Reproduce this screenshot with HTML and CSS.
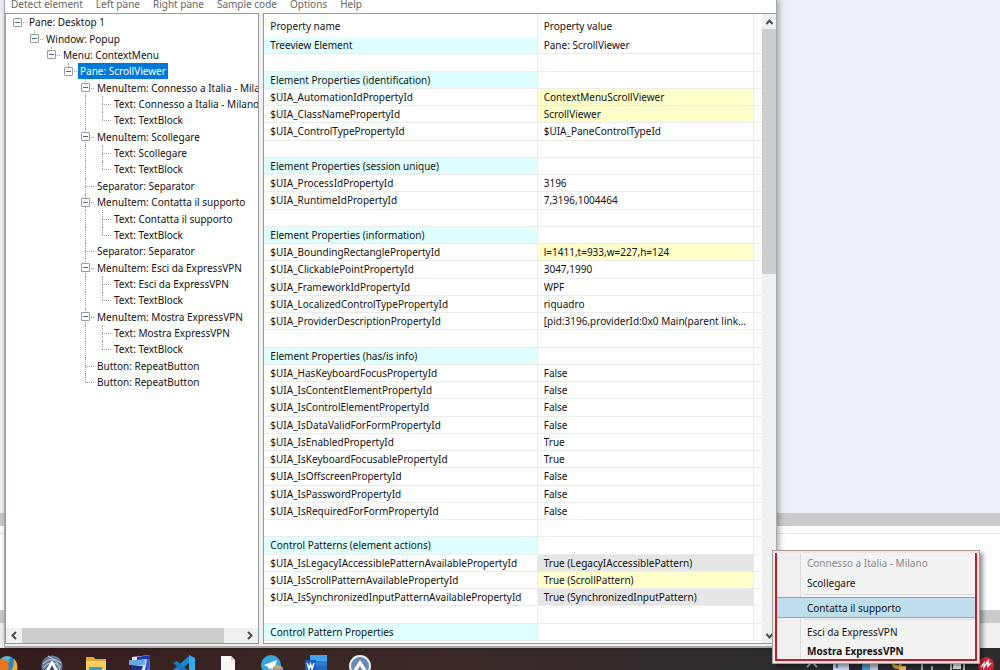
FILE: index.html
```html
<!DOCTYPE html>
<html lang="en">
<head>
<meta charset="utf-8">
<title>UI inspector</title>
<link rel="stylesheet" href="styles.css">
</head>
<body>
<main class="desktop">
  <div class="backdrop"><div class="sky"></div><div class="band"></div><div class="sheet"></div><div class="band"></div><div class="foot"></div></div>
  <section class="window">
    <nav class="menubar">
      <button>Detect element</button><button>Left pane</button><button>Right pane</button><button>Sample code</button><button>Options</button><button>Help</button>
    </nav>
    <div class="panes">
      <div class="pane tree-pane">
        <div class="tree-view">
        <ul class="tree">
          <li class="row l0"><span class="g first last"><button class="box" aria-label="Collapse"></button></span><span class="label">Pane: Desktop 1</span></li>
          <li class="row l1"><span class="g last"><button class="box" aria-label="Collapse"></button></span><span class="label">Window: Popup</span></li>
          <li class="row l2"><span class="g last"><button class="box" aria-label="Collapse"></button></span><span class="label">Menu: ContextMenu</span></li>
          <li class="row l3"><span class="g last"><button class="box" aria-label="Collapse"></button></span><span class="label selected">Pane: ScrollViewer</span></li>
          <li class="row l4"><span class="g"><button class="box" aria-label="Collapse"></button></span><span class="label">MenuItem: Connesso a Italia - Milano</span></li>
          <li class="row l4"><span class="g line"></span><span class="g"></span><span class="label">Text: Connesso a Italia - Milano</span></li>
          <li class="row l4"><span class="g line"></span><span class="g last"></span><span class="label">Text: TextBlock</span></li>
          <li class="row l4"><span class="g"><button class="box" aria-label="Collapse"></button></span><span class="label">MenuItem: Scollegare</span></li>
          <li class="row l4"><span class="g line"></span><span class="g"></span><span class="label">Text: Scollegare</span></li>
          <li class="row l4"><span class="g line"></span><span class="g last"></span><span class="label">Text: TextBlock</span></li>
          <li class="row l4"><span class="g"></span><span class="label">Separator: Separator</span></li>
          <li class="row l4"><span class="g"><button class="box" aria-label="Collapse"></button></span><span class="label">MenuItem: Contatta il supporto</span></li>
          <li class="row l4"><span class="g line"></span><span class="g"></span><span class="label">Text: Contatta il supporto</span></li>
          <li class="row l4"><span class="g line"></span><span class="g last"></span><span class="label">Text: TextBlock</span></li>
          <li class="row l4"><span class="g"></span><span class="label">Separator: Separator</span></li>
          <li class="row l4"><span class="g"><button class="box" aria-label="Collapse"></button></span><span class="label">MenuItem: Esci da ExpressVPN</span></li>
          <li class="row l4"><span class="g line"></span><span class="g"></span><span class="label">Text: Esci da ExpressVPN</span></li>
          <li class="row l4"><span class="g line"></span><span class="g last"></span><span class="label">Text: TextBlock</span></li>
          <li class="row l4"><span class="g"><button class="box" aria-label="Collapse"></button></span><span class="label">MenuItem: Mostra ExpressVPN</span></li>
          <li class="row l4"><span class="g line"></span><span class="g"></span><span class="label">Text: Mostra ExpressVPN</span></li>
          <li class="row l4"><span class="g line"></span><span class="g last"></span><span class="label">Text: TextBlock</span></li>
          <li class="row l4"><span class="g"></span><span class="label">Button: RepeatButton</span></li>
          <li class="row l4"><span class="g last"></span><span class="label">Button: RepeatButton</span></li>
        </ul>
        </div>
        <div class="hscroll">
          <button aria-label="Scroll left"><svg width="8" height="9" viewBox="0 0 8 9"><path d="M6 1L2.5 4.5L6 8"/></svg></button>
          <div class="thumb"></div>
          <button aria-label="Scroll right"><svg width="8" height="9" viewBox="0 0 8 9"><path d="M2 1L5.5 4.5L2 8"/></svg></button>
        </div>
      </div>
      <div class="pane list-pane">
        <table class="props">
          <thead><tr><th>Property name</th><th>Property value</th><th></th></tr></thead>
          <tbody>
            <tr class="head"><td>Treeview Element</td><td>Pane: ScrollViewer</td><td></td></tr>
            <tr><td></td><td></td><td></td></tr>
            <tr class="head"><td>Element Properties (identification)</td><td></td><td></td></tr>
            <tr class="key"><td>$UIA_AutomationIdPropertyId</td><td>ContextMenuScrollViewer</td><td></td></tr>
            <tr class="key"><td>$UIA_ClassNamePropertyId</td><td>ScrollViewer</td><td></td></tr>
            <tr><td>$UIA_ControlTypePropertyId</td><td>$UIA_PaneControlTypeId</td><td></td></tr>
            <tr><td></td><td></td><td></td></tr>
            <tr class="head"><td>Element Properties (session unique)</td><td></td><td></td></tr>
            <tr><td>$UIA_ProcessIdPropertyId</td><td>3196</td><td></td></tr>
            <tr><td>$UIA_RuntimeIdPropertyId</td><td>7,3196,1004464</td><td></td></tr>
            <tr><td></td><td></td><td></td></tr>
            <tr class="head"><td>Element Properties (information)</td><td></td><td></td></tr>
            <tr class="key"><td>$UIA_BoundingRectanglePropertyId</td><td>l=1411,t=933,w=227,h=124</td><td></td></tr>
            <tr><td>$UIA_ClickablePointPropertyId</td><td>3047,1990</td><td></td></tr>
            <tr><td>$UIA_FrameworkIdPropertyId</td><td>WPF</td><td></td></tr>
            <tr><td>$UIA_LocalizedControlTypePropertyId</td><td>riquadro</td><td></td></tr>
            <tr><td>$UIA_ProviderDescriptionPropertyId</td><td>[pid:3196,providerId:0x0 Main(parent link...</td><td></td></tr>
            <tr><td></td><td></td><td></td></tr>
            <tr class="head"><td>Element Properties (has/is info)</td><td></td><td></td></tr>
            <tr><td>$UIA_HasKeyboardFocusPropertyId</td><td>False</td><td></td></tr>
            <tr><td>$UIA_IsContentElementPropertyId</td><td>False</td><td></td></tr>
            <tr><td>$UIA_IsControlElementPropertyId</td><td>False</td><td></td></tr>
            <tr><td>$UIA_IsDataValidForFormPropertyId</td><td>False</td><td></td></tr>
            <tr><td>$UIA_IsEnabledPropertyId</td><td>True</td><td></td></tr>
            <tr><td>$UIA_IsKeyboardFocusablePropertyId</td><td>True</td><td></td></tr>
            <tr><td>$UIA_IsOffscreenPropertyId</td><td>False</td><td></td></tr>
            <tr><td>$UIA_IsPasswordPropertyId</td><td>False</td><td></td></tr>
            <tr><td>$UIA_IsRequiredForFormPropertyId</td><td>False</td><td></td></tr>
            <tr><td></td><td></td><td></td></tr>
            <tr class="head"><td>Control Patterns (element actions)</td><td></td><td></td></tr>
            <tr class="dim"><td>$UIA_IsLegacyIAccessiblePatternAvailablePropertyId</td><td>True (LegacyIAccessiblePattern)</td><td></td></tr>
            <tr class="key"><td>$UIA_IsScrollPatternAvailablePropertyId</td><td>True (ScrollPattern)</td><td></td></tr>
            <tr class="dim"><td>$UIA_IsSynchronizedInputPatternAvailablePropertyId</td><td>True (SynchronizedInputPattern)</td><td></td></tr>
            <tr><td></td><td></td><td></td></tr>
            <tr class="head"><td>Control Pattern Properties</td><td></td><td></td></tr>
          </tbody>
        </table>
        <div class="vscroll">
          <button aria-label="Scroll up"><svg width="9" height="8" viewBox="0 0 9 8"><path d="M1.5 6L4.5 2.5L7.5 6"/></svg></button>
          <div class="thumb"></div>
          <button aria-label="Scroll down"><svg width="9" height="8" viewBox="0 0 9 8"><path d="M1.5 2L4.5 5.5L7.5 2"/></svg></button>
        </div>
      </div>
    </div>
  </section>
</main>
<footer class="taskbar">
  <div class="apps">
    <button aria-label="Firefox"><svg width="22" height="22" viewBox="0 0 22 22"><circle cx="10" cy="11" r="10" fill="#2787c5"/><path d="M2 6Q5 2 10 1Q8 5 13 6Q10 9 12 12L9 22H3Q0 15 2 6Z" fill="#e8741c"/><path d="M5 3Q10 0 14 2L11 6Q7 6 5 3Z" fill="#4eb7e2"/><path d="M17 4Q24 11 17 22H9Q17 16 17 4Z" fill="#f4ae2b"/></svg></button>
    <button aria-label="Inspector"><svg width="22" height="22" viewBox="0 0 22 22"><circle cx="11" cy="11" r="10.5" fill="#65799c"/><path d="M2 9Q10 0 20 8M2 13Q10 3 20 12M7 1Q18 5 19 17" stroke="#c1cad8" fill="none"/><path d="M11 5L20 20H16L11 11L6 20H2Z" fill="#fff"/><path d="M11 10L14 16H8Z" fill="#3d4d69"/></svg></button>
    <button aria-label="Files"><svg width="22" height="22" viewBox="0 0 22 22"><path d="M1 2H8L10 4H21V22H1Z" fill="#f7cf64"/><path d="M1 2H8L10 4H21V6H1Z" fill="#e1a837"/><path d="M4 12H17V22H4Z" fill="#3c9bd4"/></svg></button>
    <button aria-label="Window tool"><svg width="22" height="22" viewBox="0 0 22 22"><path d="M3 2L21 0L20 20L3 17Z" fill="#dce7f6"/><path d="M8 2L21 0V4L8 5Z" fill="#1c36b5"/><path d="M18 4H21L19 20H15Z" fill="#3750c8"/><rect y="5" width="16" height="5" fill="#67a9df"/><path d="M2 10L14 11L11 19L4 17Z" fill="#1e2e8c"/></svg></button>
    <button aria-label="Code editor"><svg width="22" height="22" viewBox="0 0 22 22"><path d="M16 0L22 3V22H16Z" fill="#3ba8eb"/><path d="M16 1V8L4 18L0 15Z" fill="#168bd2"/><path d="M0 8L4 6L17 17V22Z" fill="#1679bd"/></svg></button>
    <button aria-label="Document"><svg width="22" height="22" viewBox="0 0 22 22"><path d="M4 1H14L18 5V22H4Z" fill="#f8f8f8"/><path d="M14 1V5H18Z" fill="#c9c9c9"/></svg></button>
    <button aria-label="Telegram"><svg width="22" height="22" viewBox="0 0 22 22"><circle cx="10" cy="10" r="10" fill="#35a5dc"/><path d="M3 10L16 5L13 16L9 13L8 15L7 12Z" fill="#fff"/><circle cx="17" cy="16" r="6" fill="#999"/><path d="M12 12L16 10L20 12L18 14Z" fill="#d0ad5b"/></svg></button>
    <button aria-label="Word"><svg width="22" height="22" viewBox="0 0 22 22"><path d="M5 0H22V22H5Z" fill="#2866bd"/><path d="M5 0H22V6H5Z" fill="#41a5ee"/><path d="M5 6H22V11H5Z" fill="#2b7cd3"/><rect y="5" width="11" height="12" fill="#185abd"/><path d="M2 8L4 14L5.500 9L7 14L9 8" fill="none" stroke="#fff" stroke-width="1.500"/></svg></button>
    <button aria-label="AutoIt"><svg width="22" height="22" viewBox="0 0 22 22"><circle cx="11" cy="11" r="10" fill="#6989b3" stroke="#eceef0" stroke-width="2"/><path d="M11 5L19 17H15L11 11L7 17H3Z" fill="#fff"/></svg></button>
  </div>
  <div class="tray">
    <button aria-label="Show hidden icons"><svg width="18" height="12" viewBox="0 0 18 12"><path d="M4 8L9 3L14 8" fill="none" stroke="#ddd" stroke-width="1.500"/></svg></button>
    <button aria-label="VPN"><svg width="18" height="12" viewBox="0 0 18 12"><path d="M3 0H15L17 3V12H1V3Z" fill="#d3e1ef"/><path d="M4 2H14V5H12V3H6V9H4Z" fill="#3976b8"/></svg></button>
    <button aria-label="Monitor"><svg width="18" height="12" viewBox="0 0 18 12"><rect x="1" width="13" height="12" fill="#4c9bc7"/><rect x="9" y="2" width="8" height="10" fill="#c4cad0"/></svg></button>
    <button aria-label="Security"><svg width="18" height="12" viewBox="0 0 18 12"><circle cx="7" cy="5" r="5" fill="#e1a436"/><circle cx="7" cy="3" r="3" fill="#222"/><path d="M9 7H16V12H9Z" fill="#edc45f"/></svg></button>
    <button aria-label="Device"><svg width="18" height="12" viewBox="0 0 18 12"><path d="M8 2H3V12M13 7V12H9" fill="none" stroke="#ddd" stroke-width="1.500"/></svg></button>
    <button aria-label="Power"><svg width="18" height="12" viewBox="0 0 18 12"><path d="M3 3H16V12H3ZM5 0V3M9 0V3" fill="none" stroke="#eee" stroke-width="1.500"/><rect x="5" y="5" width="8" height="5" fill="#eee"/></svg></button>
    <button aria-label="Antivirus"><svg width="18" height="16" viewBox="0 0 18 16"><circle cx="9" cy="9" r="8" fill="#cf2638"/><path d="M4 11L7 7V11L11 5V10L14 7" fill="none" stroke="#fff" stroke-width="1.500"/></svg></button>
  </div>
</footer>
<div class="popup" role="menu">
  <div class="items">
    <button role="menuitem" disabled>Connesso a Italia - Milano</button>
    <button role="menuitem">Scollegare</button>
    <hr>
    <button role="menuitem" class="hot">Contatta il supporto</button>
    <hr>
    <button role="menuitem">Esci da ExpressVPN</button>
    <button role="menuitem" class="strong">Mostra ExpressVPN</button>
  </div>
</div>
</body>
</html>
```
FILE: styles.css
```css
* { box-sizing: border-box; }
body { margin: 0; height: 100vh; display: flex; flex-direction: column; overflow: hidden; position: relative; background: #fff; color: #111; font: 10px/16px "Noto Sans", "Open Sans", sans-serif; }
button { margin: 0; padding: 0; border: 0; background: none; font: inherit; color: inherit; text-align: left; white-space: nowrap; }
svg { display: block; }
.desktop { flex: 1; min-height: 0; position: relative; display: flex; }
.backdrop { flex: 1; display: flex; flex-direction: column; }
.sky { flex: 513; background: #edf0f7; }
.band { flex: 13; background: #cacaca; }
.sheet { flex: 84; background: linear-gradient(#fff 7px, #e6e6e6 7px, #e6e6e6 8px, #fff 8px); }
.foot { flex: 25; background: #f0f0f0; }

.window { position: absolute; top: 0; bottom: 0; left: 4px; width: 77.3%; display: flex; flex-direction: column; background: #f0f0f0; border: solid #a9a9ad; border-width: 0 1px 2px 1px; box-shadow: 2px 0 6px rgba(0, 0, 0, .35); }
.menubar { height: 13px; display: flex; align-items: flex-end; gap: 13px; padding: 0 6px 1px; background: #fff; color: #666; overflow: hidden; }
.panes { flex: 1; min-height: 0; display: grid; grid-template-columns: 255fr 514fr; gap: 4px; padding-bottom: 2px; }
.pane { min-width: 0; min-height: 0; background: #fff; border: 1px solid #9a9a9e; overflow: hidden; }

.tree-pane { display: flex; flex-direction: column; }
.tree-view { flex: 1; min-height: 0; overflow: hidden; }
.tree { height: 61.3%; margin: 0; padding: 0 0 0 7px; list-style: none; display: grid; grid-auto-rows: 1fr; }
.row { display: flex; align-items: stretch; min-height: 0; white-space: nowrap; }
.l1 { padding-left: 17px; }
.l2 { padding-left: 34px; }
.l3 { padding-left: 51px; }
.l4 { padding-left: 68px; }
.label { display: flex; align-items: center; padding: 0 2px; margin-left: -3px; }
.selected { background: #0078d7; color: #fff; }
.g { flex: none; width: 17px; display: grid; grid-template: 1fr 1fr / 4px 1fr; }
.g::before { content: ""; grid-area: 1 / 2 / 3 / 3; width: 0; border-left: 1px dotted #a0a0a0; }
.g::after { content: ""; grid-area: 2 / 2 / 3 / 3; width: 9px; border-top: 1px dotted #a0a0a0; }
.g.last::before { grid-row: 1 / 2; }
.g.first::before, .g.line::after { visibility: hidden; }
.box { grid-area: 1 / 1 / 3 / 3; align-self: center; z-index: 1; width: 9px; height: 9px; border: 1px solid #9a9a9a; border-radius: 1px; background: linear-gradient(#4b63a7, #4b63a7) center / 5px 1px no-repeat #fff; }
.hscroll { flex: none; height: 15px; display: flex; background: #f0f0f0; }
.hscroll button, .vscroll button { flex: none; width: 16px; height: 15px; display: grid; place-items: center; }
.hscroll svg, .vscroll svg { fill: none; stroke: #4a4a4a; stroke-width: 2; }
.thumb { background: #cdcdcd; }
.hscroll .thumb { width: 80%; margin-right: auto; }
.vscroll { flex: none; width: 14px; display: flex; flex-direction: column; background: #f0f0f0; }
.vscroll button { width: 14px; }
.vscroll .thumb { height: 39%; margin-bottom: auto; }

.list-pane { display: flex; border-right: 0; }
.props, .props tbody, .props thead { display: flex; flex-direction: column; }
.props { flex: 1; min-width: 0; padding-bottom: 2px; }
.props tbody { flex: 1; min-height: 0; }
.props tr { display: grid; grid-template-columns: 273fr 216fr 8px; }
.props tbody tr { flex: 1 1 0; min-height: 0; }
.props th, .props td { display: flex; align-items: center; min-width: 0; padding: 0 0 0 6px; font-weight: 400; white-space: nowrap; overflow: hidden; text-align: left; }
.props th { height: 23px; border-right: 1px solid #ececec; }
.props td { border-bottom: 1px solid #ececec; border-right: 1px solid #ececec; }
.props tr > :last-child { border-right: 0; padding: 0; }
.head td:first-child { background: #e0ffff; }
.key td:nth-child(2) { background: #ffffcc; }
.dim td:nth-child(2) { background: #e6e6e6; }

.taskbar { flex: none; height: 22px; display: flex; justify-content: space-between; overflow: hidden; background: linear-gradient(90deg, #351d1d, #3b2b28 45%, #2c2c2e 80%); }
.apps { display: flex; gap: 22px; padding-top: 7px; margin-left: -3px; }
.tray { display: flex; gap: 11px; align-items: flex-start; padding: 11px 5px 0 0; }
.tray button:last-child { margin-top: -3px; }

.popup { position: absolute; right: 2%; bottom: 6px; width: 208px; padding: 2px; border: 1px solid #a5a0a0; background: #fbe3e3; box-shadow: 3px 3px 4px rgba(0, 0, 0, .4); }
.items { display: flex; flex-direction: column; border: solid #c01f2c; border-width: 0 2px 2px; background: linear-gradient(90deg, #f0f0f0 23px, #dcdcdc 23px, #dcdcdc 24px, #f3f3f3 24px); }
.items button { height: 20px; padding-left: 30px; }
.items button:disabled { color: #8a8a8a; }
.items .hot { height: 21px; background: #c0dfed; border: solid #6fafd4; border-width: 1px 0; }
.items hr { width: 100%; height: 1px; margin: 1px 0 2px; border: 0; background: #dadada; background-clip: content-box; padding-left: 27px; }
.items .strong { height: 17px; font-weight: 700; }
```
